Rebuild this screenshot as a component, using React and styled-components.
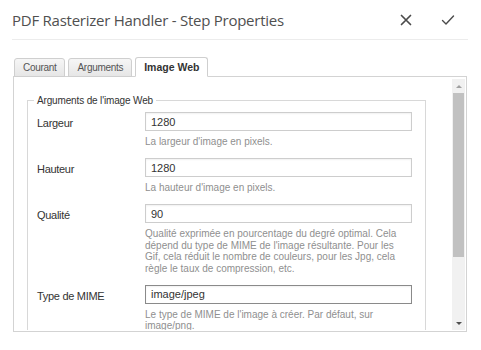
import React from "react";
import styled, { createGlobalStyle } from "styled-components";

const Global = createGlobalStyle`
  html, body {
    margin: 0;
    padding: 0;
    background: #fff;
  }
  body {
    font-family: "Liberation Sans", Arial, sans-serif;
  }
`;

const Dialog = styled.div`
  width: 481px;
  height: 350px;
  overflow: hidden;
`;

const Header = styled.div`
  height: 40px;
  margin: 0 13px 0 12px;
  padding-right: 6px;
  display: flex;
  align-items: center;
  border-bottom: 1px solid #ececec;
  box-sizing: border-box;
`;

const Title = styled.h1`
  flex: 1;
  margin: 0;
  font-family: "Open Sans", "Liberation Sans", sans-serif;
  font-weight: 400;
  font-size: 15px;
  letter-spacing: -0.25px;
  color: #505050;
`;

const IconButton = styled.button`
  width: 28px;
  height: 28px;
  border: 0;
  background: none;
  padding: 0;
  display: flex;
  align-items: center;
  justify-content: center;
  margin-left: ${(p) => p.$gap || 0}px;
  color: #4b4b4b;
`;

const Tabs = styled.div`
  display: flex;
  gap: 3px;
  padding-left: 14px;
  margin-top: 17px;
  position: relative;
  z-index: 1;
`;

const Tab = styled.div`
  box-sizing: border-box;
  padding: 0 8px;
  display: flex;
  align-items: center;
  border: 1px solid #cfcfcf;
  border-bottom-color: ${(p) => (p.$active ? "#fff" : "#cfcfcf")};
  border-radius: 3px 3px 0 0;
  font-family: "Liberation Sans", Tahoma, sans-serif;
  font-size: ${(p) => (p.$active ? 10.5 : 10)}px;
  letter-spacing: ${(p) => (p.$active ? 0 : -0.3)}px;
  font-weight: ${(p) => (p.$active ? 700 : 400)};
  color: ${(p) => (p.$active ? "#333" : "#555")};
  background: ${(p) =>
    p.$active ? "#fff" : "linear-gradient(#f6f6f6, #e6e6e6)"};
  margin-bottom: -1px;
  height: ${(p) => (p.$active ? 20 : 19)}px;
  align-self: flex-end;
`;

const Panel = styled.div`
  margin: 0 14px 0 13px;
  height: 256px;
  border: 1px solid #d3d3d3;
  box-sizing: border-box;
  display: flex;
  padding: 2px 1px 1px 0;
`;

const Scroll = styled.div`
  flex: 1;
  overflow: hidden;
  padding: 16px 26px 0 13px;
`;

const Fieldset = styled.fieldset`
  margin: 0;
  border: 1px solid #d8d8d8;
  padding: 6px 13px 0 9px;
`;

const Legend = styled.legend`
  padding: 0 3px;
  margin-left: -3px;
  font-family: "Liberation Sans", Tahoma, sans-serif;
  font-size: 10px;
  letter-spacing: -0.15px;
  color: #333;
`;

const Row = styled.div`
  display: grid;
  grid-template-columns: 108px 1fr;
  margin-bottom: 10.5px;
`;

const Label = styled.label`
  font-family: "Liberation Sans", Tahoma, sans-serif;
  font-size: 11px;
  letter-spacing: -0.3px;
  color: #333;
  padding-top: 5px;
`;

const Field = styled.div`
  display: flex;
  flex-direction: column;
`;

const Input = styled.div`
  height: 19px;
  box-sizing: border-box;
  border: 1px solid ${(p) => (p.$focus ? "#8a8a8a" : "#cdcdcd")};
  box-shadow: inset 0 1px 2px rgba(0, 0, 0, 0.06);
  padding: 0 5px;
  display: flex;
  align-items: center;
  font-family: "Liberation Sans", Tahoma, sans-serif;
  font-size: 11px;
  color: #333;
`;

const Help = styled.div`
  margin-top: 5px;
  font-family: "Liberation Sans", Tahoma, sans-serif;
  font-size: 10px;
  line-height: 11.5px;
  color: #8f8f8f;
  padding-right: 12px;
`;

const Scrollbar = styled.div`
  width: 13px;
  display: flex;
  flex-direction: column;
  background: #f1f1f1;
`;

const Arrow = styled.div`
  height: 14px;
  display: flex;
  align-items: center;
  justify-content: center;
  &::after {
    content: "";
    border-left: 3px solid transparent;
    border-right: 3px solid transparent;
    ${(p) =>
      p.$down
        ? "border-top: 3px solid #505050;"
        : "border-bottom: 3px solid #a0a0a0;"}
  }
`;

const Thumb = styled.div`
  height: 164px;
  margin: 0 1px;
  background: #c1c1c1;
`;

const Track = styled.div`
  flex: 1;
`;

const rows = [
  {
    label: "Largeur",
    value: "1280",
    help: "La largeur d'image en pixels.",
  },
  {
    label: "Hauteur",
    value: "1280",
    help: "La hauteur d'image en pixels.",
  },
  {
    label: "Qualité",
    value: "90",
    help:
      "Qualité exprimée en pourcentage du degré optimal. Cela dépend du type de MIME de l'image résultante. Pour les Gif, cela réduit le nombre de couleurs, pour les Jpg, cela règle le taux de compression, etc.",
  },
  {
    label: "Type de MIME",
    value: "image/jpeg",
    help: "Le type de MIME de l'image à créer. Par défaut, sur image/png.",
    focus: true,
  },
];

export default function App() {
  return (
    <Dialog>
      <Global />
      <Header>
        <Title>PDF Rasterizer Handler - Step Properties</Title>
        <IconButton aria-label="Fermer">
          <svg width="14" height="14" viewBox="0 0 14 14">
            <path
              d="M2.5 2.5 L11.5 11.5 M11.5 2.5 L2.5 11.5"
              stroke="#4b4b4b"
              strokeWidth="1.7"
              strokeLinecap="round"
            />
          </svg>
        </IconButton>
        <IconButton aria-label="Valider" $gap={14}>
          <svg width="16" height="14" viewBox="0 0 16 14">
            <path
              d="M2.5 7.5 L6 11 L13.5 3"
              stroke="#4b4b4b"
              strokeWidth="1.4"
              fill="none"
              strokeLinecap="round"
              strokeLinejoin="round"
            />
          </svg>
        </IconButton>
      </Header>
      <Tabs>
        <Tab>Courant</Tab>
        <Tab>Arguments</Tab>
        <Tab $active>Image Web</Tab>
      </Tabs>
      <Panel>
        <Scroll>
          <Fieldset>
            <Legend>Arguments de l'image Web</Legend>
            {rows.map((r) => (
              <Row key={r.label}>
                <Label>{r.label}</Label>
                <Field>
                  <Input $focus={r.focus}>{r.value}</Input>
                  <Help>{r.help}</Help>
                </Field>
              </Row>
            ))}
          </Fieldset>
        </Scroll>
        <Scrollbar>
          <Arrow />
          <Thumb />
          <Track />
          <Arrow $down />
        </Scrollbar>
      </Panel>
    </Dialog>
  );
}
